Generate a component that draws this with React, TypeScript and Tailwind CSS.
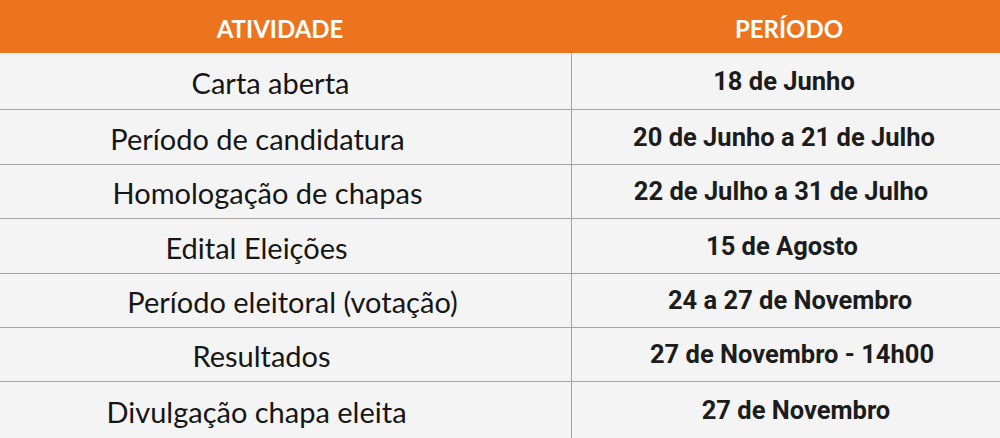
import React from "react";

const rows = [
  { a: "Carta aberta", p: "18 de Junho", h: "h-[57px]", la: "pr-[30px]", ra: "pr-[4px]" },
  { a: "Período de candidatura", p: "20 de Junho a 21 de Julho", h: "h-[55px]", la: "pr-[56px]", ra: "pr-[4px]" },
  { a: "Homologação de chapas", p: "22 de Julho a 31 de Julho", h: "h-[54px]", la: "pr-[36px]", ra: "pr-[10px]" },
  { a: "Edital Eleições", p: "15 de Agosto", h: "h-[55px]", la: "pr-[58px]", ra: "pr-[8px]" },
  { a: "Período eleitoral (votação)", p: "24 a 27 de Novembro", h: "h-[54px]", la: "pl-[14px]", ra: "pl-[8px]" },
  { a: "Resultados", p: "27 de Novembro - 14h00", h: "h-[54px]", la: "pr-[48px]", ra: "pl-[12px]" },
  { a: "Divulgação chapa eleita", p: "27 de Novembro", h: "h-[56px]", la: "pr-[58px]", ra: "pl-[20px]" },
];

export default function App() {
  return (
    <div className="w-[1000px] h-[438px] bg-[#f4f4f4] overflow-hidden">
      <div className="grid grid-cols-[572px_1fr] h-[53px] bg-[#ec741e] text-white font-bold text-[24px] font-['Lato',sans-serif]">
        <div className="flex items-center justify-center pr-[12px] pt-[4px]">ATIVIDADE</div>
        <div className="flex items-center justify-center pl-[6px] pt-[4px]">PERÍODO</div>
      </div>
      {rows.map((r, i) => (
        <div
          key={i}
          className={`grid grid-cols-[572px_1fr] ${r.h} ${i < rows.length - 1 ? "border-b border-[#a3a3a3]" : ""}`}
        >
          <div
            className={`flex items-center justify-center border-r border-[#a3a3a3] text-[29px] text-[#161616] font-['Lato',sans-serif] pt-[3px] ${r.la}`}
          >
            {r.a}
          </div>
          <div
            className={`flex items-center justify-center text-[25.5px] font-bold text-[#1c1c1c] font-['Roboto',sans-serif] ${r.ra}`}
          >
            {r.p}
          </div>
        </div>
      ))}
    </div>
  );
}
